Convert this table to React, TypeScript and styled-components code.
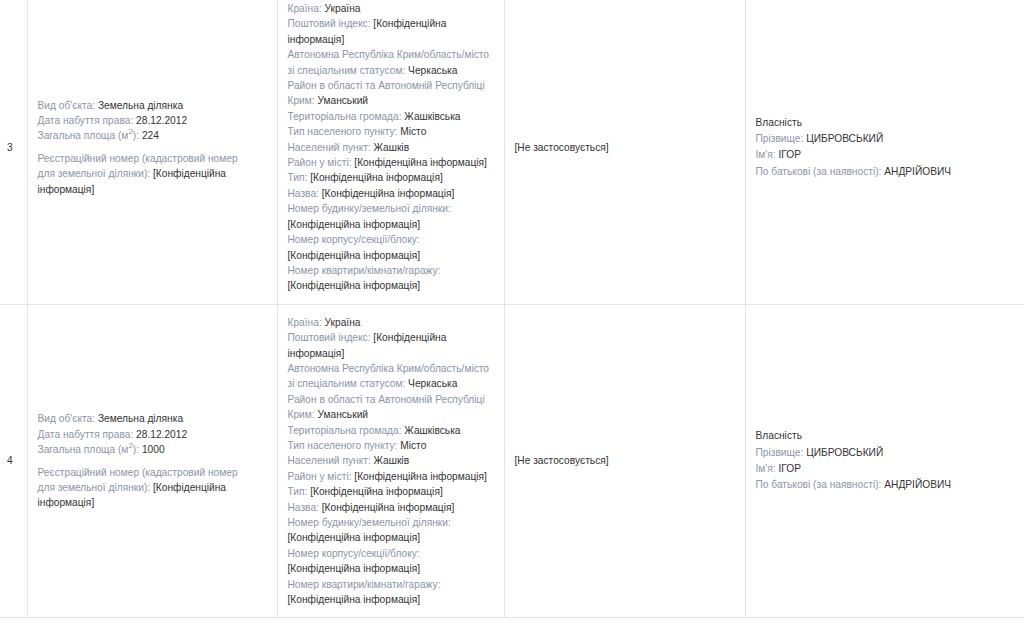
import React from "react";
import styled, { createGlobalStyle } from "styled-components";

interface Field {
    label: string;
    value: React.ReactNode;
}

interface Owner {
    surname: string;
    name: string;
    patronymic: string;
}

interface Record {
    id: number;
    area: string;
    date: string;
    owner: Owner;
}

const CONF = "[Конфіденційна інформація]";

const addressFields: Field[] = [
    { label: "Країна", value: "Україна" },
    { label: "Поштовий індекс", value: CONF },
    { label: "Автономна Республіка Крим/область/місто зі спеціальним статусом", value: "Черкаська" },
    { label: "Район в області та Автономній Республіці Крим", value: "Уманський" },
    { label: "Територіальна громада", value: "Жашківська" },
    { label: "Тип населеного пункту", value: "Місто" },
    { label: "Населений пункт", value: "Жашків" },
    { label: "Район у місті", value: CONF },
    { label: "Тип", value: CONF },
    { label: "Назва", value: CONF },
    { label: "Номер будинку/земельної ділянки", value: CONF },
    { label: "Номер корпусу/секції/блоку", value: CONF },
    { label: "Номер квартири/кімнати/гаражу", value: CONF },
];

const records: Record[] = [
    { id: 3, area: "224", date: "28.12.2012", owner: { surname: "ЦИБРОВСЬКИЙ", name: "ІГОР", patronymic: "АНДРІЙОВИЧ" } },
    { id: 4, area: "1000", date: "28.12.2012", owner: { surname: "ЦИБРОВСЬКИЙ", name: "ІГОР", patronymic: "АНДРІЙОВИЧ" } },
];

const FieldLine: React.FunctionComponent<Field & { spaced?: boolean }> = ({ label, value, spaced }) => (
    <Line spaced={spaced}>
        <Label>{label}: </Label>
        <Value>{value}</Value>
    </Line>
);

const App: React.FunctionComponent = () => (
    <>
        <GlobalStyle />
        <Wrapper>
            <Table>
                <colgroup>
                    <col style={{ width: 27 }} />
                    <col style={{ width: 250 }} />
                    <col style={{ width: 227 }} />
                    <col style={{ width: 241 }} />
                    <col />
                </colgroup>
                <tbody>
                    {records.map((r) => (
                        <Row key={r.id}>
                            <Cell narrow>
                                <Value>{r.id}</Value>
                            </Cell>
                            <Cell>
                                <ObjectBlock>
                                    <FieldLine label="Вид об'єкта" value="Земельна ділянка" />
                                    <FieldLine label="Дата набуття права" value={r.date} />
                                    <Line>
                                        <Label>
                                            Загальна площа (м<Sup>2</Sup>):{" "}
                                        </Label>
                                        <Value>{r.area}</Value>
                                    </Line>
                                    <FieldLine spaced label="Реєстраційний номер (кадастровий номер для земельної ділянки)" value={CONF} />
                                </ObjectBlock>
                            </Cell>
                            <Cell>
                                {addressFields.map((f) => (
                                    <FieldLine key={f.label} label={f.label} value={f.value} />
                                ))}
                            </Cell>
                            <Cell>
                                <Value>[Не застосовується]</Value>
                            </Cell>
                            <Cell>
                                <OwnerLine>
                                    <Value>Власність</Value>
                                </OwnerLine>
                                <OwnerLine>
                                    <Label>Прізвище: </Label>
                                    <Value>{r.owner.surname}</Value>
                                </OwnerLine>
                                <OwnerLine>
                                    <Label>Ім'я: </Label>
                                    <Value>{r.owner.name}</Value>
                                </OwnerLine>
                                <OwnerLine>
                                    <Label>По батькові (за наявності): </Label>
                                    <Value>{r.owner.patronymic}</Value>
                                </OwnerLine>
                            </Cell>
                        </Row>
                    ))}
                </tbody>
            </Table>
        </Wrapper>
    </>
);

export default App;

const GlobalStyle = createGlobalStyle`
    html, body {
        margin: 0;
        padding: 0;
        background: #ffffff;
        font-family: "Liberation Sans", Arial, sans-serif;
        overflow: hidden;
    }
`;

const Wrapper = styled.div`
    width: 1024px;
    margin-top: -10px;
`;

const Table = styled.table`
    width: 100%;
    table-layout: fixed;
    border-collapse: collapse;
    font-size: 10.2px;
    line-height: 15.4px;
    color: #333333;
`;

const Row = styled.tr`
    border-top: 1px solid #e4e4e4;
    border-bottom: 1px solid #e4e4e4;
`;

const Cell = styled.td<{ narrow?: boolean }>`
    vertical-align: middle;
    padding: 10px 9px 10px ${({ narrow }) => (narrow ? "7px" : "10px")};
    border-left: 1px solid #e4e4e4;

    &:first-child {
        border-left: none;
    }
`;

const ObjectBlock = styled.div`
    max-width: 208px;
`;

const Line = styled.div<{ spaced?: boolean }>`
    margin-top: ${({ spaced }) => (spaced ? "7px" : "0")};
`;

const OwnerLine = styled.div`
    line-height: 16.4px;
`;

const Label = styled.span`
    color: #8b95a8;
`;

const Value = styled.span`
    color: #333333;
`;

const Sup = styled.sup`
    font-size: 8px;
    line-height: 0;
    vertical-align: 5px;
`;
